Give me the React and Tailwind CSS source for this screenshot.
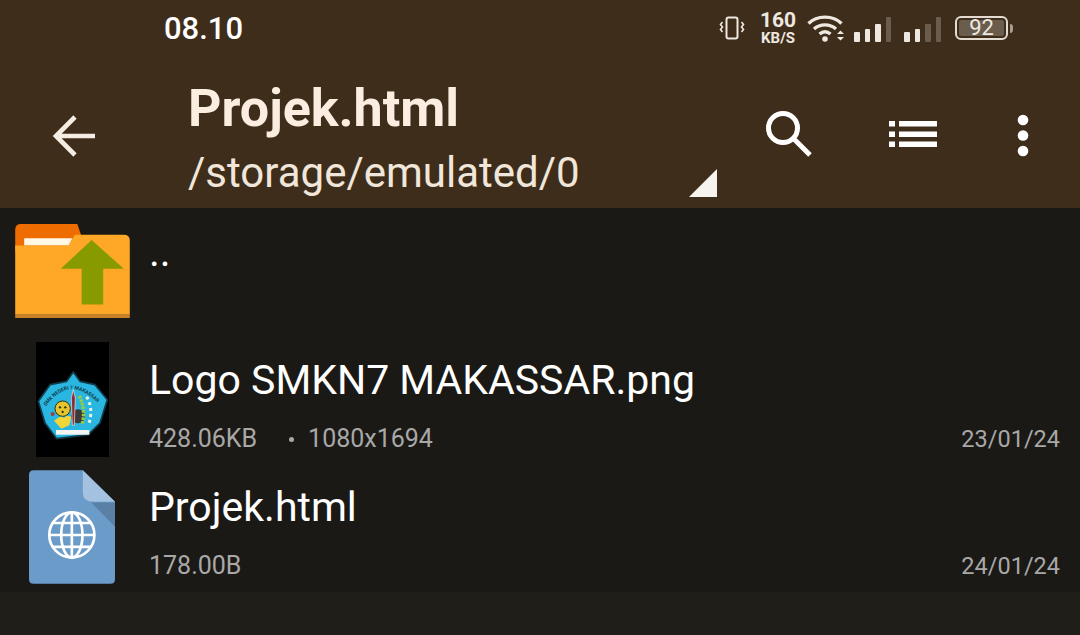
import React from "react";

const Signal = ({ full }) => (
  <div className="flex items-end gap-[5px] h-[25px] mt-[3px]">
    {[10, 13, 18, 25].map((h, i) => (
      <div
        key={i}
        className={i < full ? "w-[5.5px] rounded-[1px] bg-[#eee8e0]" : "w-[5.5px] rounded-[1px] bg-[#6b5d4d]"}
        style={{ height: h }}
      />
    ))}
  </div>
);

const StatusIcons = () => (
  <div className="flex items-center text-[#eee8e0]">
    {/* vibrate */}
    <svg width="26" height="26" viewBox="0 0 26 26" fill="none" stroke="currentColor" strokeWidth="2" className="mr-[14px]">
      <rect x="7.5" y="2.5" width="11" height="21" rx="2" />
      <path d="M3.5 7 l-2 2.5 2 2.5 -2 2.5 2 2.5 M22.5 7 l2 2.5 -2 2.5 2 2.5 -2 2.5" strokeWidth="1.6" />
    </svg>
    <div className="flex flex-col items-center w-[38px] mr-[10px] font-bold">
      <span className="text-[21px] leading-[21px]">160</span>
      <span className="text-[15px] leading-[15px]">KB/S</span>
    </div>
    {/* wifi */}
    <svg width="38" height="30" viewBox="0 0 38 30" fill="none" stroke="currentColor" strokeWidth="3.4" className="mr-[9px]">
      <path d="M1.5 10.5 C10 2 26 2 34.5 10.5" />
      <path d="M7 16 C13 10.5 23 10.5 29 16" />
      <path d="M12.5 21 C16 18 20 18 23.5 21" />
      <circle cx="18" cy="26" r="2.8" fill="currentColor" stroke="none" />
      <path d="M30 21 l3.5 -3.5 3.5 3.5 z M30 24 l3.5 3.5 3.5 -3.5 z" fill="currentColor" stroke="none" />
    </svg>
    <Signal full={3} />
    <div className="w-[13px]" />
    <Signal full={2} />
    <div className="w-[14px]" />
    {/* battery */}
    <div className="w-[53px] h-[24px] border-2 border-[#e4dcd2] rounded-[6px] p-[2px] flex">
      <div className="flex-1 bg-[#6b5d4d] rounded-[2px] flex items-center justify-center text-[22px] leading-none">92</div>
    </div>
    <div className="w-[3px] h-[9px] ml-[2px] bg-[#a89c8e] rounded-r-sm" />
  </div>
);

const FolderUp = () => (
  <svg width="115" height="94" viewBox="45 45 345 283">
    <path d="M45 62 Q45 45 62 45 H232 L243 77 V130 H45 Z" fill="#ef6c00" />
    <path d="M72 88 H217 L207 110 H72 Z" fill="#fff8e7" />
    <path d="M45 110 H205 L225 77 H372 Q390 77 390 95 V318 H45 Z" fill="#ffa726" />
    <path d="M45 318 H390 V328 H45 Z" fill="#c9802b" />
    <path d="M275 93 L372 180 H310 V287 H245 V180 H182 Z" fill="#879b00" />
  </svg>
);

const SchoolLogo = () => (
  <svg width="73" height="115" viewBox="48 22 219 345" className="bg-black">
    <path
      d="M160 112 L180 140 L225 150 L262 195 L240 265 L205 300 L110 312 L75 265 L55 200 L90 150 L140 140 Z"
      fill="#29b6e0"
      stroke="#123c4c"
      strokeWidth="5"
      strokeLinejoin="round"
    />
    <path id="emblem-arc" d="M78 215 Q150 115 238 210" fill="none" />
    <text fontSize="15" fontWeight="700" fill="#123c4c" fontFamily="Roboto, sans-serif">
      <textPath href="#emblem-arc">SMK NEGERI 7 MAKASSAR</textPath>
    </text>
    <circle cx="128" cy="222" r="23" fill="#e6c62e" stroke="#33300f" strokeWidth="3" />
    <circle cx="120" cy="218" r="3.5" fill="#33300f" />
    <circle cx="136" cy="218" r="3.5" fill="#33300f" />
    <circle cx="128" cy="232" r="3.5" fill="#33300f" />
    <path d="M102 258 Q124 240 132 250 Q136 240 154 246 L148 272 L124 282 Z" fill="#f0d63a" />
    <circle cx="98" cy="238" r="6" fill="#9c3a4a" />
    <circle cx="174" cy="245" r="21" fill="#3a3a3a" />
    <path d="M160 165 L166 190 L163 272 L157 272 L154 190 Z" fill="#8a2b3a" stroke="#f0e8e0" strokeWidth="2" />
    <path d="M178 184 Q198 225 186 270" fill="none" stroke="#9ccc3c" strokeWidth="10" strokeDasharray="8 3" />
    <path d="M200 186 Q222 225 205 272" fill="none" stroke="#e8f5e0" strokeWidth="9" strokeDasharray="9 9" />
    <path d="M108 286 H208 V300 H108 Z" fill="#f3f3f3" />
  </svg>
);

const HtmlDoc = () => (
  <svg width="86" height="114" viewBox="28 25 259 342">
    <path d="M42 25 H190 L287 120 V353 Q287 367 273 367 H42 Q28 367 28 353 V39 Q28 25 42 25 Z" fill="#6b9bc8" />
    <path d="M215 122 H287 V195 Z" fill="#5b80a6" />
    <path d="M190 25 L287 120 H222 Q190 120 190 92 Z" fill="#a4c2e0" />
    <g fill="none" stroke="#fff" strokeWidth="8">
      <circle cx="157" cy="220" r="68" />
      <ellipse cx="157" cy="220" rx="32" ry="68" />
      <path d="M157 152 V288 M89 220 H225 M100 184 H214 M100 256 H214" />
    </g>
  </svg>
);

const FileRow = ({ icon, name, size, dims, date, iconClass }) => (
  <div className="h-[127px] flex">
    <div className={`w-[149px] flex-shrink-0 flex ${iconClass}`}>{icon}</div>
    <div className="flex-1 pr-[20px] flex flex-col">
      <p className="text-[41px] leading-[48px] mt-[21px] text-white">{name}</p>
      <div className="mt-auto mb-[8px] flex items-center text-[25px] leading-[30px] text-[#a8a8a8]">
        <span>{size}</span>
        {dims && <span className="ml-[32px] w-[5px] h-[5px] rounded-full bg-[#a8a8a8]" />}
        {dims && <span className="ml-[14px]">{dims}</span>}
        <span className="ml-auto text-[23.5px]">{date}</span>
      </div>
    </div>
  </div>
);

export default function App() {
  return (
    <div className="w-[1080px] h-[635px] overflow-hidden bg-[#1b1915] flex flex-col font-['Roboto',sans-serif]">
      <header className="h-[208px] flex-shrink-0 bg-[#3f2d1b] flex flex-col">
        <div className="h-[56px] flex items-center justify-between pl-[164px] pr-[67px]">
          <span className="text-[31px] font-medium text-white mt-[2px]">08.10</span>
          <StatusIcons />
        </div>
        <div className="flex-1 flex">
          <div className="w-[188px] flex-shrink-0 pl-[52px] pt-[59px]">
            <svg width="44" height="42" viewBox="0 0 44 42" fill="none" stroke="#f5ece2" strokeWidth="4.6">
              <path d="M43 21 H4 M23 2 L4 21 L23 40" />
            </svg>
          </div>
          <div className="w-[501px] flex-shrink-0">
            <p className="text-[52px] leading-[60px] font-bold text-[#fbeee0] mt-[23px]">Projek.html</p>
            <p className="text-[42px] leading-[50px] text-[#f1e6da] mt-[9px]">/storage/emulated/0</p>
          </div>
          <div className="w-[28px] flex-shrink-0 pt-[113px]">
            <svg width="28" height="28" viewBox="0 0 28 28"><path d="M28 0 V28 H0 Z" fill="#f7f3ee" /></svg>
          </div>
          <div className="flex-1 flex pt-[55px]">
            <svg width="46" height="46" viewBox="0 0 46 46" fill="none" stroke="#fff" strokeWidth="5" className="ml-[49px]">
              <circle cx="17" cy="17" r="14.5" />
              <path d="M27 27 L44 44" />
            </svg>
            <svg width="48" height="26" viewBox="0 0 48 26" fill="#fff" className="ml-[77px] mt-[10px]">
              <path d="M0 0 H6 V5.5 H0 Z M10 0 H48 V5.5 H10 Z M0 10.5 H6 V16 H0 Z M10 10.5 H48 V16 H10 Z M0 20.5 H6 V26 H0 Z M10 20.5 H48 V26 H10 Z" />
            </svg>
            <svg width="12" height="44" viewBox="0 0 12 44" fill="#fff" className="ml-[80px] mt-[3px]">
              <circle cx="6" cy="6" r="5.3" />
              <circle cx="6" cy="21.5" r="5.3" />
              <circle cx="6" cy="37" r="5.3" />
            </svg>
          </div>
        </div>
      </header>

      <div className="h-[127px] flex-shrink-0 flex">
        <div className="w-[149px] flex-shrink-0 pl-[15px] pt-[16px]"><FolderUp /></div>
        <p className="text-[41px] leading-[48px] mt-[20px] text-white">..</p>
      </div>
      <FileRow icon={<SchoolLogo />} iconClass="pl-[36px] pt-[7px]" name="Logo SMKN7 MAKASSAR.png" size="428.06KB" dims="1080x1694" date="23/01/24" />
      <FileRow icon={<HtmlDoc />} iconClass="pl-[29px] pt-[8px]" name="Projek.html" size="178.00B" date="24/01/24" />
      <div className="mt-[3px] flex-1 bg-[#201e19]" />
    </div>
  );
}
